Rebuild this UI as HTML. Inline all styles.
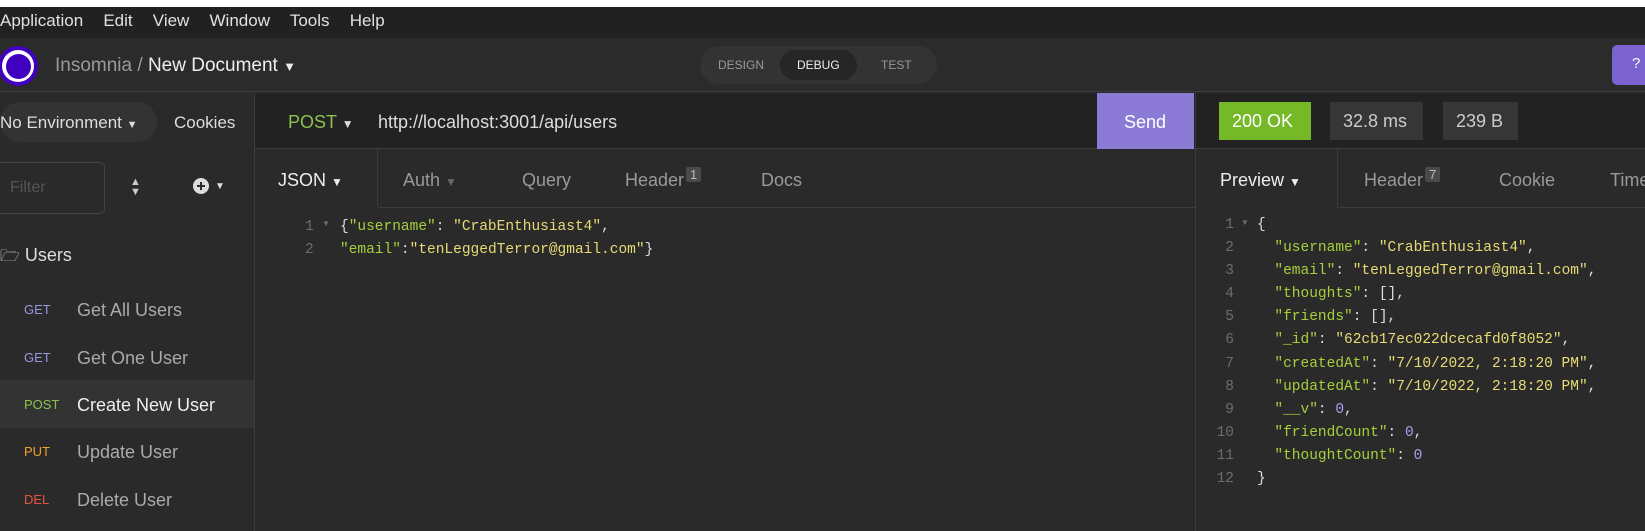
<!DOCTYPE html>
<html><head><meta charset="utf-8"><style>
*{box-sizing:border-box;margin:0;padding:0}
body{width:1645px;height:531px;overflow:hidden;background:#2a2a2a;font-family:"Liberation Sans",sans-serif;color:#ddd;position:relative}
.a{position:absolute;white-space:nowrap}
.mono{font-family:"Liberation Mono",monospace;font-size:14.5px}
.g{color:#a6cf3c}.y{color:#e6db74}.p{color:#a99ef0}.w{color:#ddd}.n{color:#6d6d6d}
.bd{font-size:13px;background:#4a4a4a;padding:0 4px;margin-left:2px;position:relative;top:-7px;border-radius:2px;color:#bbb}
</style></head><body>
<div class="a" style="left:0;top:0;width:1645px;height:7px;background:#fff"></div>
<div class="a" style="left:0;top:7px;width:1645px;height:31px;background:#212121"></div>
<div class="a" style="left:0;top:11px;font-size:17px;color:#e0e0e0;word-spacing:2px">Application&nbsp;&nbsp; Edit&nbsp;&nbsp; View&nbsp;&nbsp; Window&nbsp;&nbsp; Tools&nbsp;&nbsp; Help</div>
<div class="a" style="left:0;top:38px;width:1645px;height:54px;background:#2b2b2b;border-bottom:1px solid #3c3c3c"></div>
<div class="a" style="left:-2px;top:46px;width:40px;height:40px;border-radius:50%;background:#4000bf"></div>
<div class="a" style="left:2px;top:50px;width:32px;height:32px;border-radius:50%;background:#fff"></div>
<div class="a" style="left:6px;top:54px;width:25px;height:25px;border-radius:50%;background:#4000bf"></div>
<div class="a" style="left:55px;top:55px;font-size:19px;color:#999">Insomnia / <span style="color:#eee">New Document</span> <span style="font-size:13px;color:#eee">▼</span></div>
<div class="a" style="left:700px;top:46px;width:237px;height:38px;border-radius:19px;background:#333"></div>
<div class="a" style="left:780px;top:50px;width:77px;height:30px;border-radius:15px;background:#262626"></div>
<div class="a" style="left:718px;top:58px;font-size:12px;color:#999">DESIGN</div>
<div class="a" style="left:797px;top:58px;font-size:12px;color:#eee">DEBUG</div>
<div class="a" style="left:881px;top:58px;font-size:12px;color:#999">TEST</div>
<div class="a" style="left:1612px;top:45px;width:40px;height:40px;border-radius:5px;background:#7a62cf"></div>
<div class="a" style="left:1632px;top:55px;font-size:15px;color:#fff">?</div>
<!-- sidebar -->
<div class="a" style="left:254px;top:93px;width:1px;height:438px;background:#3c3c3c"></div>
<div class="a" style="left:0;top:102px;width:157px;height:40px;border-radius:20px;background:#333"></div>
<div class="a" style="left:0;top:113px;font-size:17px;color:#ddd">No Environment <span style="font-size:11px">▼</span></div>
<div class="a" style="left:174px;top:113px;font-size:17px;color:#ddd">Cookies</div>
<div class="a" style="left:-5px;top:162px;width:110px;height:52px;border:1px solid #444;border-radius:5px"></div>
<div class="a" style="left:10px;top:179px;font-size:16px;color:#555">Filter</div>
<div class="a" style="left:130px;top:177px;font-size:11px;color:#ccc;line-height:10px">▲<br>▼</div>
<div class="a" style="left:193px;top:178px;width:16px;height:16px;border-radius:50%;background:#ddd"></div>
<div class="a" style="left:197px;top:185px;width:8px;height:2px;background:#2a2a2a"></div>
<div class="a" style="left:200px;top:182px;width:2px;height:8px;background:#2a2a2a"></div>
<div class="a" style="left:215px;top:181px;font-size:10px;color:#ddd">▼</div>
<div class="a" style="left:0;top:245px;font-size:18px;color:#ddd"><span style="font-size:16px">🗁</span> Users</div>
<div class="a" style="left:0;top:380px;width:254px;height:48px;background:#333"></div>
<div class="a" style="left:24px;top:302px;font-size:13px;color:#9a96e0">GET</div>
<div class="a" style="left:77px;top:300px;font-size:18px;color:#aaa">Get All Users</div>
<div class="a" style="left:24px;top:350px;font-size:13px;color:#9a96e0">GET</div>
<div class="a" style="left:77px;top:348px;font-size:18px;color:#aaa">Get One User</div>
<div class="a" style="left:24px;top:397px;font-size:13px;color:#8bc34a">POST</div>
<div class="a" style="left:77px;top:395px;font-size:18px;color:#eee">Create New User</div>
<div class="a" style="left:24px;top:444px;font-size:13px;color:#f0a030">PUT</div>
<div class="a" style="left:77px;top:442px;font-size:18px;color:#aaa">Update User</div>
<div class="a" style="left:24px;top:492px;font-size:13px;color:#e5533c">DEL</div>
<div class="a" style="left:77px;top:490px;font-size:18px;color:#aaa">Delete User</div>
<!-- request -->
<div class="a" style="left:255px;top:93px;width:940px;height:56px;background:#222;border-bottom:1px solid #3c3c3c"></div>
<div class="a" style="left:288px;top:112px;font-size:18px;color:#8bc34a">POST <span style="font-size:12px;color:#ddd">▼</span></div>
<div class="a" style="left:378px;top:112px;font-size:18px;color:#ddd">http://localhost:3001/api/users</div>
<div class="a" style="left:1097px;top:93px;width:97px;height:56px;background:#8b7bd7"></div>
<div class="a" style="left:1124px;top:112px;font-size:18px;color:#fff">Send</div>
<div class="a" style="left:378px;top:207px;width:817px;height:1px;background:#3c3c3c"></div>
<div class="a" style="left:377px;top:149px;width:1px;height:58px;background:#3c3c3c"></div>
<div class="a" style="left:278px;top:170px;font-size:18px;color:#eee">JSON <span style="font-size:12px">▼</span></div>
<div class="a" style="left:403px;top:170px;font-size:18px;color:#999">Auth <span style="font-size:12px;color:#666">▼</span></div>
<div class="a" style="left:522px;top:170px;font-size:18px;color:#999">Query</div>
<div class="a" style="left:625px;top:170px;font-size:18px;color:#999">Header<span class="bd">1</span></div>
<div class="a" style="left:761px;top:170px;font-size:18px;color:#999">Docs</div>
<div class="a mono n" style="left:305px;top:216px;line-height:23px">1<br>2</div>
<div class="a n" style="left:322px;top:219px;font-size:8px">▼</div>
<div class="a mono" style="left:340px;top:216px;line-height:23px"><span class="w">{</span><span class="g">"username"</span><span class="w">: </span><span class="y">"CrabEnthusiast4"</span><span class="w">,</span><br><span class="g">"email"</span><span class="w">:</span><span class="y">"tenLeggedTerror@gmail.com"</span><span class="w">}</span></div>
<!-- response -->
<div class="a" style="left:1195px;top:93px;width:1px;height:438px;background:#3c3c3c"></div>
<div class="a" style="left:1196px;top:93px;width:449px;height:56px;background:#222;border-bottom:1px solid #3c3c3c"></div>
<div class="a" style="left:1219px;top:102px;width:92px;height:38px;background:#75b828"></div>
<div class="a" style="left:1232px;top:111px;font-size:18px;color:#fff">200 OK</div>
<div class="a" style="left:1330px;top:102px;width:93px;height:38px;background:#363636"></div>
<div class="a" style="left:1343px;top:111px;font-size:18px;color:#ccc">32.8 ms</div>
<div class="a" style="left:1443px;top:102px;width:75px;height:38px;background:#363636"></div>
<div class="a" style="left:1456px;top:111px;font-size:18px;color:#ccc">239 B</div>
<div class="a" style="left:1337px;top:149px;width:1px;height:58px;background:#3c3c3c"></div>
<div class="a" style="left:1337px;top:207px;width:308px;height:1px;background:#3c3c3c"></div>
<div class="a" style="left:1220px;top:170px;font-size:18px;color:#eee">Preview <span style="font-size:12px">▼</span></div>
<div class="a" style="left:1364px;top:170px;font-size:18px;color:#999">Header<span class="bd">7</span></div>
<div class="a" style="left:1499px;top:170px;font-size:18px;color:#999">Cookie</div>
<div class="a" style="left:1610px;top:170px;font-size:18px;color:#999">Timeline</div>
<div class="a mono n" style="left:1216px;top:214px;line-height:23.1px;text-align:right;width:18px">1<br>2<br>3<br>4<br>5<br>6<br>7<br>8<br>9<br>10<br>11<br>12</div>
<div class="a n" style="left:1241px;top:218px;font-size:8px">▼</div>
<div class="a mono" style="left:1257px;top:214px;line-height:23.1px"><span class="w">{</span><br>
&nbsp; <span class="g">"username"</span><span class="w">: </span><span class="y">"CrabEnthusiast4"</span><span class="w">,</span><br>
&nbsp; <span class="g">"email"</span><span class="w">: </span><span class="y">"tenLeggedTerror@gmail.com"</span><span class="w">,</span><br>
&nbsp; <span class="g">"thoughts"</span><span class="w">: [],</span><br>
&nbsp; <span class="g">"friends"</span><span class="w">: [],</span><br>
&nbsp; <span class="g">"_id"</span><span class="w">: </span><span class="y">"62cb17ec022dcecafd0f8052"</span><span class="w">,</span><br>
&nbsp; <span class="g">"createdAt"</span><span class="w">: </span><span class="y">"7/10/2022, 2:18:20 PM"</span><span class="w">,</span><br>
&nbsp; <span class="g">"updatedAt"</span><span class="w">: </span><span class="y">"7/10/2022, 2:18:20 PM"</span><span class="w">,</span><br>
&nbsp; <span class="g">"__v"</span><span class="w">: </span><span class="p">0</span><span class="w">,</span><br>
&nbsp; <span class="g">"friendCount"</span><span class="w">: </span><span class="p">0</span><span class="w">,</span><br>
&nbsp; <span class="g">"thoughtCount"</span><span class="w">: </span><span class="p">0</span><br>
<span class="w">}</span></div>
</body></html>
